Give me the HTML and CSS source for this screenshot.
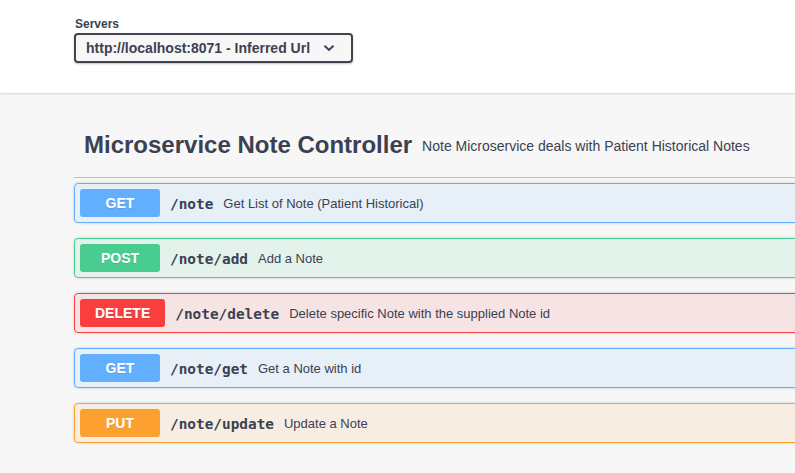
FILE: index.html
```html
<!DOCTYPE html>
<html>
<head>
<meta charset="utf-8">
<link rel="stylesheet" href="styles.css">
</head>
<body>
<div class="scheme">
  <div class="servers">
    <div class="servers-title">Servers</div>
    <div class="select">
      <span>http://localhost:8071 - Inferred Url</span>
      <svg class="chev" width="12" height="8" viewBox="0 0 12 8"><path d="M1.5 1.8 L6 6 L10.5 1.8" fill="none" stroke="#3b4151" stroke-width="2"/></svg>
    </div>
  </div>
</div>
<div class="main">
  <div class="tag">
    <span class="tag-name">Microservice Note Controller</span>
    <small class="tag-desc">Note Microservice deals with Patient Historical Notes</small>
  </div>
  <div class="op get"><span class="method">GET</span><span class="path">/note</span><span class="summary">Get List of Note (Patient Historical)</span></div>
  <div class="op post"><span class="method">POST</span><span class="path">/note/add</span><span class="summary">Add a Note</span></div>
  <div class="op delete"><span class="method">DELETE</span><span class="path">/note/delete</span><span class="summary">Delete specific Note with the supplied Note id</span></div>
  <div class="op get"><span class="method">GET</span><span class="path">/note/get</span><span class="summary">Get a Note with id</span></div>
  <div class="op put"><span class="method">PUT</span><span class="path">/note/update</span><span class="summary">Update a Note</span></div>
</div>
</body>
</html>
```
FILE: styles.css
```css
html, body {
  margin: 0;
  padding: 0;
  overflow: hidden;
  background: #f7f7f7;
  font-family: "Liberation Sans", Arial, sans-serif;
  color: #3b4151;
}
.scheme {
  background: #fff;
  box-shadow: 0 1px 2px 0 rgba(0,0,0,.15);
  padding: 17px 0 30px 74px;
  position: relative;
}
.servers-title {
  font-size: 12px;
  font-weight: 700;
  line-height: 14px;
  margin-left: 1px;
  margin-bottom: 2px;
}
.select {
  display: inline-flex;
  align-items: center;
  box-sizing: border-box;
  width: 279px;
  height: 30px;
  border: 2px solid #41444e;
  border-radius: 4px;
  box-shadow: 0 1px 2px 0 rgba(0,0,0,.25);
  background: #f7f7f7;
  padding: 0 10px;
  font-size: 14px;
  font-weight: 700;
  color: #3b4151;
}
.select span { flex: 1; }
.chev { margin-right: 6px; }
.main {
  width: 900px;
  padding: 9px 0 0 74px;
}
.tag {
  display: flex;
  align-items: center;
  box-sizing: border-box;
  height: 76px;
  padding: 15px 20px 5px 10px;
  border-bottom: 1px solid rgba(59,65,81,.3);
  margin-bottom: 5px;
}
.tag-name {
  font-size: 24px;
  font-weight: 700;
}
.tag-desc {
  font-size: 14px;
  padding: 0 10px;
  flex: 1;
  position: relative;
  top: 1px;
}
.op {
  display: flex;
  align-items: center;
  box-sizing: border-box;
  height: 40px;
  padding: 5px;
  margin-bottom: 15px;
  border: 1px solid;
  border-radius: 4px;
  box-shadow: 0 0 3px rgba(0,0,0,.19);
}
.method {
  box-sizing: border-box;
  min-width: 80px;
  padding: 6px 15px;
  border-radius: 3px;
  color: #fff;
  font-size: 14px;
  font-weight: 700;
  line-height: 16px;
  text-align: center;
  text-shadow: 0 1px 0 rgba(0,0,0,.1);
}
.path {
  font-family: "DejaVu Sans Mono", monospace;
  font-size: 14.4px;
  font-weight: 700;
  padding: 0 10px;
  color: #3b4151;
  position: relative;
  top: 1px;
}
.summary {
  font-size: 13px;
  color: #3b4151;
}
.get { background: rgba(97,175,254,.1); border-color: #61affe; }
.get .method { background: #61affe; }
.post { background: rgba(73,204,144,.1); border-color: #49cc90; }
.post .method { background: #49cc90; }
.delete { background: rgba(249,62,62,.1); border-color: #f93e3e; }
.delete .method { background: #f93e3e; }
.put { background: rgba(252,161,48,.1); border-color: #fca130; }
.put .method { background: #fca130; }
```
